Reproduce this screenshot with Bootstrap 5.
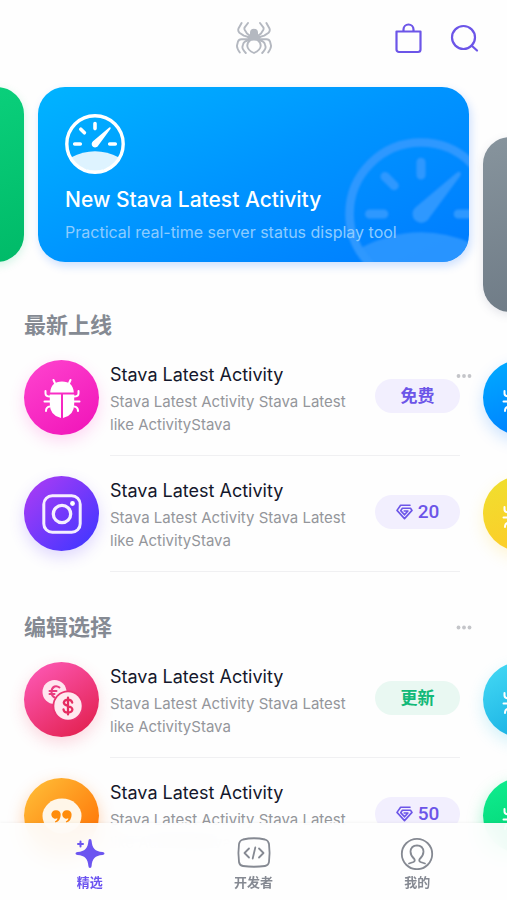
<!DOCTYPE html>
<html lang="zh-CN">
<head>
<meta charset="utf-8">
<meta name="viewport" content="width=device-width, initial-scale=1">
<title>精选</title>
<link href="https://cdn.jsdelivr.net/npm/bootstrap@5.3.0/dist/css/bootstrap.min.css" rel="stylesheet">
<style>
body{font-family:Inter,"Noto Sans CJK SC",sans-serif;color:#14172b;background:#fefefe}
.app{height:100vh;overflow:hidden auto;scrollbar-width:none;padding-bottom:78px}
.app::-webkit-scrollbar{display:none}
svg{display:block;fill:none;stroke-linecap:round;stroke-linejoin:round}
.plain{background:none;border:0;padding:0}
.topbar{display:grid;grid-template-columns:1fr auto 1fr;align-items:center;height:76px;margin-bottom:11px;padding:0 28px}
.brand-mark{color:#b4b8c0}
.accent{color:#6c55e8}
.strip{gap:14px}
.promo{flex:none;width:85vw;min-height:175px;border-radius:27px;padding:27px;color:#fff}
.promo-green{background:linear-gradient(160deg,#12e08a,#00ba68);box-shadow:0 3px 10px rgba(0,200,110,.18)}
.promo-blue{background:linear-gradient(155deg,#00b4ff,#0094ff 50%,#007bff);box-shadow:2px 4px 10px rgba(0,100,255,.2);padding-bottom:18px}
.promo-grey{background:linear-gradient(165deg,#87949d,#626e7a);margin:50px 0 -2px;box-shadow:0 3px 10px rgba(80,90,120,.15)}
.promo-title{font-size:21px;line-height:28px;font-weight:500;margin:12px 0 6px}
.promo-sub{font-size:16px;line-height:24px;color:#8dccff}
.ghost{right:-28px;top:51px;color:#2e98ff;filter:blur(1px)}
.gauge-soft{opacity:.87}
.sec-head{padding:0 35px 0 24px;margin-bottom:20px}
.sec-title{font-size:22px;line-height:30px;font-weight:600;color:#858a93;margin:0}
.dots{color:#c4c5c9}
.dots-low{top:61px;right:35px}
.shelf{gap:23px;padding-left:24px;margin-bottom:20px}
.shelf-page{flex:none;width:86vw}
.shelf-page:last-child{display:flex;flex-direction:column;gap:41px}
.app-row{gap:11px;margin-bottom:20px}
.app-icon{display:flex;align-items:center;justify-content:center;flex:none;width:75px;height:75px;border-radius:50%;color:#fff}
.i-pink{background:linear-gradient(145deg,#ff45cf,#f012b8);box-shadow:0 6px 16px rgba(255,60,200,.2)}
.i-violet{background:linear-gradient(135deg,#b13cf4,#4a37ff 85%);box-shadow:0 6px 16px rgba(100,60,255,.2)}
.i-red{background:linear-gradient(145deg,#ff5cbc,#e01c46);box-shadow:0 6px 16px rgba(240,60,100,.2)}
.i-orange{background:linear-gradient(135deg,#ffc23a,#ff6a00);box-shadow:0 6px 16px rgba(255,120,20,.35)}
.i-blue{background:linear-gradient(160deg,#00acff,#007bff);box-shadow:0 6px 16px rgba(0,120,255,.2)}
.i-yellow{background:linear-gradient(160deg,#efe02f,#ffc928);box-shadow:0 6px 16px rgba(255,210,40,.2)}
.i-cyan{background:linear-gradient(150deg,#46dbf5,#10a8e0);box-shadow:0 6px 16px rgba(30,190,230,.2)}
.i-green{background:linear-gradient(160deg,#10ee90,#00ce70);box-shadow:0 6px 16px rgba(0,220,120,.35)}
.app-info{border-bottom:1px solid #f0f0f2;padding-bottom:19px;min-width:0}
.app-text{padding-right:20px}
.app-name{font-size:18px;line-height:30px;font-weight:400;margin:0}
.app-desc{font-size:15px;line-height:23px;color:#94969b;margin:0}
.pill{flex:none;width:85px;height:34px;margin-top:19px;border:0;border-radius:17px;background:#f2effe;color:#6c55e8;font-size:17px;line-height:24px;font-weight:600;gap:5px}
.pill-green{background:#e9f8f2;color:#12b978}
.price{font-family:Roboto,sans-serif;font-size:19px;font-weight:500}
.tabs{padding:0 8px;background:rgba(254,254,254,.93);backdrop-filter:blur(12px);box-shadow:0 -1px 3px rgba(0,0,0,.04)}
.tab{padding:12px 0 8px;font-size:13px;line-height:20px;font-weight:600;color:#858992;text-decoration:none;gap:2px}
.tab.active{color:#6c55f0}
</style>
<script src="https://cdn.jsdelivr.net/npm/bootstrap@5.3.0/dist/js/bootstrap.bundle.min.js"></script>
</head>
<body>
<svg class="d-none" aria-hidden="true">
<symbol id="spider" viewBox="0 0 36 32"><g stroke="currentColor" stroke-width="1.9" fill="none"><path d="M5.600 1 2.500 6.500Q1.600 9 3.400 10.700L7.800 13.600 14 15.500M12 1 8.700 5.300Q8 6.600 8.800 8L11 11.600 15 14.500M14 17 5.500 17.300Q2.700 17.500 2 19.600L1 23.500Q.6 26 3.800 30.500M14 17.500 9 19.600Q7.400 20.500 7 22.500L6.400 25Q6.200 27 9.800 31"/><path d="M30.400 1 33.500 6.500Q34.400 9 32.600 10.700L28.200 13.600 22 15.500M24 1 27.300 5.300Q28 6.600 27.200 8L25 11.600 21 14.500M22 17 30.500 17.300Q33.300 17.500 34 19.600L35 23.500Q35.400 26 32.200 30.500M22 17.500 27 19.600Q28.600 20.500 29 22.500L29.600 25Q29.800 27 26.200 31"/><path d="M14 18.500Q11.200 20.500 11.300 24 11.700 28.300 18 31 24.300 28.300 24.700 24 24.800 20.500 22 18.500"/></g><path fill="currentColor" d="M18 6.800a4 4 0 0 1 4 4v2l3 2.200-2.500 4.300q-4.500-1.600-9 0L11 15l3-2.200v-2a4 4 0 0 1 4-4z"/></symbol>
<symbol id="bug" viewBox="0 0 38 42"><g stroke="currentColor" stroke-width="2"><path fill="currentColor" stroke="none" d="M7.200 15.500Q8 4.500 19 4.500T30.800 15.500zM6.800 17.500H18V41Q6.800 38.500 6.800 27zM20 17.500H31.200V27Q31.200 38.500 20 41z"/><path d="M10.500 3l1.800 4M27.500 3l-1.800 4M2.500 14v2.500q0 3 4.500 3M1.500 24.500H7M7 29.500Q3 30 3 34M35.500 14v2.500q0 3-4.500 3M36.500 24.500H31M31 29.500Q35 30 35 34"/></g></symbol>
<symbol id="gauge" viewBox="0 0 60 60"><circle cx="30" cy="30" r="28.200" stroke="currentColor" stroke-width="3.400"/><path stroke="currentColor" stroke-width="3.600" d="M30 9.600v5M9.700 30h5.600M44.700 30h5.600M15.800 15.200l3.600 3.600"/><path fill="currentColor" d="M44.200 13.600q1.800-.8 1.400 1.200L33.300 31.500a3.500 3.500 0 1 1-5.300-4.300z"/><path class="gauge-soft" fill="currentColor" d="M6 43.500Q30 31 54 43.500A28 28 0 0 1 6 43.500z"/></symbol>
<symbol id="gem" viewBox="0 0 17 16"><path stroke="currentColor" stroke-width="1.600" d="M14 1.200H4.600L1 6.400l7.500 8.200L16 6.400l-1.500-2.200H6.400L4.700 6.600l3.800 4.200 3.400-3.800H8.200"/></symbol>
<symbol id="more" viewBox="0 0 16 5"><g fill="currentColor"><circle cx="2.500" cy="2.500" r="1.900"/><circle cx="8" cy="2.500" r="1.900"/><circle cx="13.500" cy="2.500" r="1.900"/></g></symbol>
</svg>

<div class="app">
<header class="topbar">
<span></span>
<svg class="brand-mark" width="36" height="32" role="img" aria-label="Stava"><use href="#spider"/></svg>
<div class="d-flex justify-content-end align-items-center">
<button class="plain accent me-4" type="button" aria-label="购物袋"><svg width="32" height="32" viewBox="0 0 32 32" stroke="currentColor" stroke-width="2.200"><path d="M2.500 9.500h24v18a2.500 2.500 0 0 1-2.500 2.500H5a2.500 2.500 0 0 1-2.500-2.500zM9.500 9V7.500a5 5 0 0 1 10 0V9"/></svg></button>
<button class="plain accent" type="button" aria-label="搜索"><svg width="29" height="29" viewBox="0 0 29 29" stroke="currentColor" stroke-width="2.200"><circle cx="13.500" cy="13.500" r="11.500"/><path d="M21.500 21.500l5.500 5"/></svg></button>
</div>
</header>

<main>
<section class="strip d-flex justify-content-center align-items-start">
<div class="promo promo-green"></div>
<article class="promo promo-blue position-relative overflow-hidden">
<svg class="ghost position-absolute" width="152" height="152" aria-hidden="true"><use href="#gauge"/></svg>
<div class="position-relative">
<svg width="60" height="60" aria-hidden="true"><use href="#gauge"/></svg>
<h1 class="promo-title">New Stava Latest Activity</h1>
<p class="promo-sub mb-0">Practical real-time server status display tool</p>
</div>
</article>
<div class="promo promo-grey"></div>
</section>

<section class="position-relative">
<div class="sec-head"><h2 class="sec-title">最新上线</h2></div>
<button class="plain dots dots-low position-absolute" type="button" aria-label="更多"><svg width="16" height="10"><use href="#more"/></svg></button>
<div class="shelf d-flex">
<div class="shelf-page">
<article class="app-row d-flex">
<div class="app-icon i-pink"><svg width="38" height="42" aria-hidden="true"><use href="#bug"/></svg></div>
<div class="app-info d-flex flex-grow-1"><div class="app-text flex-grow-1"><h3 class="app-name">Stava Latest Activity</h3><p class="app-desc">Stava Latest Activity Stava Latest like ActivityStava</p></div><button class="pill" type="button">免费</button></div>
</article>
<article class="app-row d-flex">
<div class="app-icon i-violet"><svg width="40" height="40" viewBox="0 0 40 40" stroke="#fff" stroke-opacity=".92" aria-hidden="true"><rect x="1.800" y="1.800" width="36.400" height="36.400" rx="8.500" stroke-width="3"/><circle cx="20" cy="20" r="8.700" stroke-width="3.300"/><circle cx="30.500" cy="9.500" r="2.400" fill="#fff" stroke="none"/></svg></div>
<div class="app-info d-flex flex-grow-1"><div class="app-text flex-grow-1"><h3 class="app-name">Stava Latest Activity</h3><p class="app-desc">Stava Latest Activity Stava Latest like ActivityStava</p></div><button class="pill d-flex align-items-center justify-content-center" type="button"><svg width="17" height="16" aria-hidden="true"><use href="#gem"/></svg><span class="price">20</span></button></div>
</article>
</div>
<div class="shelf-page">
<div class="app-icon i-blue"><svg width="38" height="42" aria-hidden="true"><use href="#bug"/></svg></div>
<div class="app-icon i-yellow"><svg width="38" height="42" aria-hidden="true"><use href="#bug"/></svg></div>
</div>
</div>
</section>

<section>
<div class="sec-head d-flex align-items-center justify-content-between"><h2 class="sec-title">编辑选择</h2><button class="plain dots" type="button" aria-label="更多"><svg width="16" height="5"><use href="#more"/></svg></button></div>
<div class="shelf d-flex">
<div class="shelf-page">
<article class="app-row d-flex">
<div class="app-icon i-red"><svg width="40" height="40" viewBox="0 0 40 40" aria-hidden="true"><circle cx="12.500" cy="12" r="12" fill="#ffe6f0"/><path stroke="#e93c80" stroke-width="2" d="M17.500 7.500Q15 5.500 12.500 6.500 9.500 8 9.500 12t3 5.500M7.500 11h7M7.500 14h5"/><circle cx="26" cy="26" r="15.500" fill="#e93472"/><circle cx="26" cy="26" r="13.700" fill="#ffe9f0"/><path stroke="#e52d62" stroke-width="2.300" d="M30.200 22.600q-.6-3-4.200-3t-4.200 3q0 2.500 4.200 3.400t4.400 3.500q-.3 3-4.400 3t-4.500-3.200M26 17.700v16.700"/></svg></div>
<div class="app-info d-flex flex-grow-1"><div class="app-text flex-grow-1"><h3 class="app-name">Stava Latest Activity</h3><p class="app-desc">Stava Latest Activity Stava Latest like ActivityStava</p></div><button class="pill pill-green" type="button">更新</button></div>
</article>
<article class="app-row d-flex">
<div class="app-icon i-orange"><svg width="40" height="36" viewBox="0 0 40 36" aria-hidden="true"><ellipse cx="20" cy="18" rx="19.500" ry="17.500" fill="#fff6e8"/><path fill="#ff8c0c" d="M14.300 12.200a4.400 4.400 0 0 1 4.400 4.600q0 6-5.300 7.800l-.5-1q2.800-1.500 2.600-3.300a4.300 4.300 0 1 1-1.200-8.100zM25.200 12.200a4.400 4.400 0 0 1 4.400 4.600q0 6-5.300 7.800l-.5-1q2.800-1.500 2.600-3.300a4.300 4.300 0 1 1-1.200-8.100z"/></svg></div>
<div class="app-info d-flex flex-grow-1"><div class="app-text flex-grow-1"><h3 class="app-name">Stava Latest Activity</h3><p class="app-desc">Stava Latest Activity Stava Latest like ActivityStava</p></div><button class="pill d-flex align-items-center justify-content-center" type="button"><svg width="17" height="16" aria-hidden="true"><use href="#gem"/></svg><span class="price">50</span></button></div>
</article>
</div>
<div class="shelf-page">
<div class="app-icon i-cyan"><svg width="38" height="42" aria-hidden="true"><use href="#bug"/></svg></div>
<div class="app-icon i-green"><svg width="38" height="42" aria-hidden="true"><use href="#bug"/></svg></div>
</div>
</div>
</section>
</main>
</div>

<nav class="tabs fixed-bottom d-flex" aria-label="主导航">
<a class="tab active flex-fill w-100 d-flex flex-column align-items-center" href="#" aria-current="page"><svg width="36" height="35" viewBox="0 0 36 35" aria-hidden="true"><path fill="currentColor" d="M18 4Q19.500 4 19.600 6C20.200 13.500 23 16.300 30.500 17q2 .2 2 1.500t-2 1.500c-7.500.7-10.300 3.500-10.900 11q-.1 2-1.600 2t-1.600-2C15.800 23.500 13 20.700 5.500 20q-2-.2-2-1.500T5.500 17C13 16.300 15.800 13.500 16.400 6Q16.500 4 18 4z"/><path stroke="currentColor" stroke-width="2" d="M8.500 6.500v5M6 9h5"/></svg>精选</a>
<a class="tab flex-fill w-100 d-flex flex-column align-items-center" href="#"><svg width="36" height="35" viewBox="0 0 36 35" stroke="currentColor" stroke-width="1.800" aria-hidden="true"><path d="M7 4.500Q18 2 29 4.500q3.500 1 4 4.500 1.200 9 0 18-.5 3.500-4 4-11 1.500-22 0-3.500-.5-4-4-1.200-9 0-18 .5-3.500 4-4.500zM13 13.500l-4.500 4.500 4.500 4.500M23 13.500l4.500 4.500-4.500 4.500M19.300 12.500l-2.600 11"/></svg>开发者</a>
<a class="tab flex-fill w-100 d-flex flex-column align-items-center" href="#"><svg width="36" height="35" viewBox="0 0 36 35" stroke="currentColor" stroke-width="1.800" aria-hidden="true"><circle cx="18" cy="19" r="15.200"/><path d="M10 28.500l4.500-1.500q2-1 .8-3Q11.500 20.500 11.500 16.500 12 10.500 18 10.300q6 .2 6.500 6.200 0 4-3.800 7.500-1.200 2 .8 3l4.500 1.500"/></svg>我的</a>
</nav>
</body>
</html>
